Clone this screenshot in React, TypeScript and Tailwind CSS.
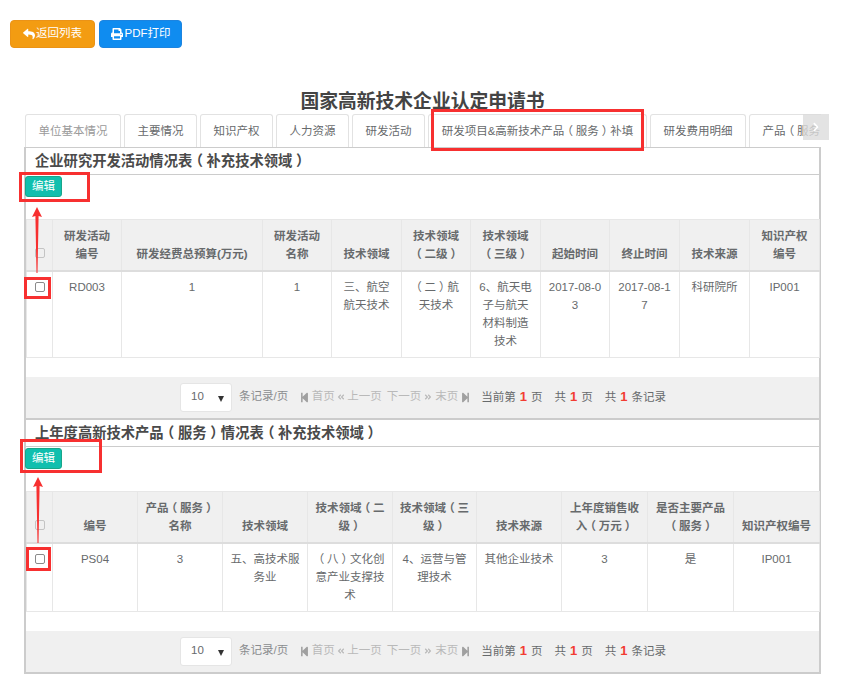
import type { ReactNode } from 'react';
import {
  FaAngleDoubleLeft,
  FaAngleDoubleRight,
  FaChevronRight,
  FaPrint,
  FaReply,
  FaStepBackward,
  FaStepForward,
} from 'react-icons/fa';

const FONT = "font-['Liberation_Sans','Noto_Sans_CJK_SC',sans-serif]";

const TABS = [
  { label: '单位基本情况', w: 'w-[96px]', muted: true },
  { label: '主要情况', w: 'w-[73px]' },
  { label: '知识产权', w: 'w-[73px]' },
  { label: '人力资源', w: 'w-[73px]' },
  { label: '研发活动', w: 'w-[73px]' },
  { label: '研发项目&高新技术产品（服务）补填', w: 'w-[219px]' },
  { label: '研发费用明细', w: 'w-[96px]' },
  { label: '产品（服务）', w: 'w-[96px]' },
];

// the reference centres full-width brackets in their cell
function Txt({ children }: { children: string }) {
  return (
    <>
      {children.split(/([（）])/).map((part, i) =>
        part === '（' ? (
          <span key={i} className="relative left-[-0.25em]">
            {part}
          </span>
        ) : part === '）' ? (
          <span key={i} className="relative left-[0.25em]">
            {part}
          </span>
        ) : (
          part
        ),
      )}
    </>
  );
}

function Checkbox({ muted }: { muted?: boolean }) {
  return (
    <span
      className={`mx-auto block h-[10px] w-[10px] rounded-[2px] border ${
        muted ? 'mb-[5px] border-[#c4c4c4] bg-[#f0f0f0]' : 'mt-[4px] border-[#8a8a8a] bg-white'
      }`}
    />
  );
}

function DataTable({
  widths,
  head,
  row,
}: {
  widths: number[];
  head: string[];
  row: string[];
}) {
  return (
    <table className="w-full table-fixed border-collapse text-[11.5px] leading-[18px] text-[#676a6c]">
      <colgroup>
        <col style={{ width: 26 }} />
        {widths.map((w, i) => (
          <col key={i} style={{ width: w }} />
        ))}
      </colgroup>
      <thead>
        <tr className="bg-[#f0f0f0]">
          <th className="border border-x-[#e7e7e7] border-t-[#e7e7e7] border-b-[2px] border-b-[#dddddd] px-1 py-[7px] align-bottom">
            <Checkbox muted />
          </th>
          {head.map((h, i) => (
            <th
              key={i}
              className="border border-x-[#e7e7e7] border-t-[#e7e7e7] border-b-[2px] border-b-[#dddddd] p-[7px] text-center align-bottom font-bold"
            >
              <Txt>{h}</Txt>
            </th>
          ))}
        </tr>
      </thead>
      <tbody>
        <tr>
          <td className="border border-[#e7e7e7] px-1 pb-[7px] pt-[6px] align-top">
            <Checkbox />
          </td>
          {row.map((c, i) => (
            <td key={i} className="break-all border border-[#e7e7e7] px-[7px] pb-[7px] pt-[6px] text-center align-top">
              <Txt>{c}</Txt>
            </td>
          ))}
        </tr>
      </tbody>
    </table>
  );
}

function Num({ children }: { children: ReactNode }) {
  return <span className="mx-[4px] text-[13px] font-bold text-[#f23c32]">{children}</span>;
}

function Pager() {
  return (
    <div className="flex h-[41px] items-center bg-[#f0f0f0] pb-[1px] pl-[154px] text-[11.5px] text-[#8a8c8e]">
      <div className="relative flex h-[29px] w-[52px] items-center rounded-[3px] border border-[#e5e5e5] bg-white pl-[10px] text-[#676a6c]">
        10
        <span className="absolute right-[7px] top-[12px] h-0 w-0 border-x-[3.5px] border-t-[6px] border-x-transparent border-t-[#333]" />
      </div>
      <span className="ml-[7px]">条记录/页</span>
      <span className="ml-[11px] flex items-center text-[#b9b9b9]">
        <FaStepBackward className="mr-[1.5px] text-[11px] text-[#a0a0a0]" />
        首页
        <FaAngleDoubleLeft className="ml-[2.5px] mr-[2px] text-[8px]" />
        上一页
        <span className="ml-[5px]">下一页</span>
        <FaAngleDoubleRight className="mx-[3px] text-[8px]" />
        末页
        <FaStepForward className="ml-[2px] text-[11px] text-[#a0a0a0]" />
      </span>
      <span className="ml-[10px] text-[#676a6c]">
        当前第<Num>1</Num>页
      </span>
      <span className="ml-[12px] text-[#676a6c]">
        共<Num>1</Num>页
      </span>
      <span className="ml-[12px] text-[#676a6c]">
        共<Num>1</Num>条记录
      </span>
    </div>
  );
}

function SectionHead({ title }: { title: string }) {
  return (
    <>
      <h3 className="h-[27px] border-b border-[#cccccc] pl-[9px] text-[14.3px] font-bold leading-[27px] text-[#4a4a4a]">
        <Txt>{title}</Txt>
      </h3>
      <div className="h-[44px] pt-[1px]">
        <button className="-ml-[1px] block h-[21px] w-[37px] rounded-[3px] border border-[#18a689] bg-[#10bfae] pt-[1px] text-[11.5px] leading-none text-white">
          编辑
        </button>
      </div>
    </>
  );
}

function RedBox({ className }: { className: string }) {
  return <div className={`pointer-events-none absolute border-[3px] border-[#f73030] ${className}`} />;
}

function UpArrow({ className }: { className: string }) {
  return (
    <svg className={`absolute ${className}`} width="12" height="66" viewBox="0 0 12 66">
      <path d="M6 0 L11 10 L7.6 9 L6.5 66 L5.5 66 L4.4 9 L1 10 Z" fill="#f73030" />
    </svg>
  );
}

export default function App() {
  return (
    <div className={`relative h-[691px] overflow-hidden bg-white ${FONT}`}>
      <div className="flex gap-[4px] pl-[10px] pt-[20px]">
        <button className="flex h-[28px] w-[85px] items-center justify-center gap-[1px] rounded-[4px] border border-[#eb9316] bg-[#f39c12] text-[11.5px] text-white">
          <FaReply className="text-[12px]" />
          返回列表
        </button>
        <button className="flex h-[28px] w-[83px] items-center justify-center gap-[2px] rounded-[4px] border border-[#1c84e0] bg-[#0f8cf0] text-[11.5px] text-white">
          <FaPrint className="text-[12px]" />
          PDF打印
        </button>
      </div>

      <h1 className="ml-[25px] mt-[41px] h-[25px] w-[795px] text-center text-[18.8px] font-bold leading-[25px] text-[#444444]">
        国家高新技术企业认定申请书
      </h1>

      <div className="relative ml-[24px] w-[797px]">
        <div className="flex h-[33px] gap-[3px] overflow-hidden pl-[1px]">
          {TABS.map((t, i) => (
            <div
              key={i}
              className={`${t.w} h-[33px] shrink-0 whitespace-nowrap rounded-t-[3px] border border-b-0 border-[#e2e2e2] text-center text-[11.5px] leading-[32px] ${
                t.muted ? 'text-[#9a9a9a]' : 'text-[#676a6c]'
              }`}
            >
              <Txt>{t.label}</Txt>
            </div>
          ))}
        </div>
        <div className="absolute right-[-8px] top-0 flex h-[26px] w-[26px] items-center justify-center bg-[#dcdcdc]/80 text-[10px] text-white">
          <FaChevronRight />
        </div>

        <div className="border-x-2 border-b-2 border-t border-[#cccccc]">
          <SectionHead title="企业研究开发活动情况表（补充技术领域）" />
          <DataTable
            widths={[69, 141, 69, 70, 69, 70, 69, 70, 70, 70]}
            head={['研发活动编号', '研发经费总预算(万元)', '研发活动名称', '技术领域', '技术领域（二级）', '技术领域（三级）', '起始时间', '终止时间', '技术来源', '知识产权编号']}
            row={['RD003', '1', '1', '三、航空航天技术', '（二）航天技术', '6、航天电子与航天材料制造技术', '2017-08-03', '2017-08-17', '科研院所', 'IP001']}
          />
          <div className="h-[19px]" />
          <Pager />
          <div className="border-t-2 border-[#cccccc]" />
          <SectionHead title="上年度高新技术产品（服务）情况表（补充技术领域）" />
          <DataTable
            widths={[85, 85, 85, 85, 84, 85, 86, 86, 86]}
            head={['编号', '产品（服务）名称', '技术领域', '技术领域（二级）', '技术领域（三级）', '技术来源', '上年度销售收入（万元）', '是否主要产品（服务）', '知识产权编号']}
            row={['PS04', '3', '五、高技术服务业', '（八）文化创意产业支撑技术', '4、运营与管理技术', '其他企业技术', '3', '是', 'IP001']}
          />
          <div className="h-[19px]" />
          <Pager />
        </div>
      </div>

      <RedBox className="left-[19px] top-[172px] h-[30px] w-[71px]" />
      <RedBox className="left-[24px] top-[277px] h-[22px] w-[27px]" />
      <RedBox className="left-[20px] top-[439px] h-[34px] w-[82px]" />
      <RedBox className="left-[26px] top-[547px] h-[24px] w-[25px]" />
      <RedBox className="left-[431px] top-[109px] h-[42px] w-[213px]" />
      <UpArrow className="left-[31px] top-[207px]" />
      <UpArrow className="left-[32px] top-[477px]" />
    </div>
  );
}
